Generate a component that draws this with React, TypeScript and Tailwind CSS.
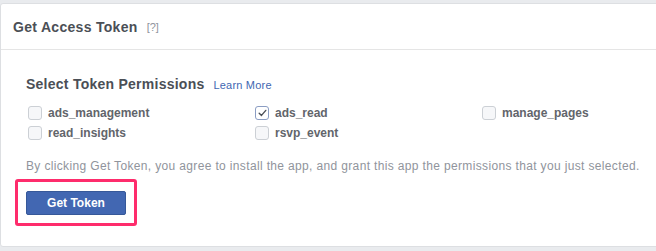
import React from 'react';

const permissions = [
  { name: 'ads_management', checked: false },
  { name: 'ads_read', checked: true },
  { name: 'manage_pages', checked: false },
  { name: 'read_insights', checked: false },
  { name: 'rsvp_event', checked: false },
];

function Checkbox({ checked }: { checked: boolean }) {
  return (
    <span
      className={
        checked
          ? 'flex h-[14px] w-[14px] items-center justify-center rounded-[3px] border border-[#8b9dc3] bg-white'
          : 'flex h-[14px] w-[14px] items-center justify-center rounded-[3px] border border-[#ccd0d5] bg-[#f6f7f9]'
      }
    >
      {checked && (
        <svg width="9" height="8" viewBox="0 0 9 8" fill="none">
          <path d="M1.2 4.2 L3.5 6.4 L7.8 1.4" stroke="#4b4f56" strokeWidth="1.4" strokeLinecap="round" strokeLinejoin="round" />
        </svg>
      )}
    </span>
  );
}

export default function App() {
  return (
    <div className="h-[251px] w-[656px] overflow-hidden bg-[#e9ebee] pt-[3px] font-['Liberation_Sans',Arial,sans-serif]">
      <div className="h-[244px] w-[680px] rounded-[3px] border border-[#dddfe2] bg-white">
        <div className="flex h-[46px] items-center gap-[9px] border-b border-[#e5e5e5] pl-[12px] pt-[2px]">
          <span className="text-[14px] font-bold tracking-[0.3px] text-[#4b4f56]">Get Access Token</span>
          <span className="text-[11px] text-[#90949c]">[?]</span>
        </div>

        <div className="pl-[25px] pt-[25px]">
          <div className="flex items-baseline gap-[9px]">
            <h2 className="text-[14px] font-bold leading-[18px] tracking-[0.25px] text-[#4b4f56]">Select Token Permissions</h2>
            <a className="text-[11px] tracking-[0.2px] text-[#4267b2]">Learn More</a>
          </div>

          <div className="mt-[9px] grid grid-cols-[227px_227px_160px]">
            {permissions.map((p) => (
              <label key={p.name} className="flex h-[20px] items-center gap-[6px] pl-[2px]">
                <Checkbox checked={p.checked} />
                <span className="text-[12px] font-bold text-[#62656b]">{p.name}</span>
              </label>
            ))}
          </div>

          <p className="mt-[15px] text-[12px] leading-[16px] tracking-[0.35px] text-[#90949c]">
            By clicking Get Token, you agree to install the app, and grant this app the permissions that you just selected.
          </p>

          <div className="-ml-[11px] mt-[5px] inline-block rounded-[3px] border-[3px] border-[#fe2c6c] p-[8px]">
            <button className="h-[24px] w-[100px] rounded-[2px] border border-[#365899] bg-[#4267b2] text-[12px] font-bold text-white">
              Get Token
            </button>
          </div>
        </div>
      </div>
    </div>
  );
}
